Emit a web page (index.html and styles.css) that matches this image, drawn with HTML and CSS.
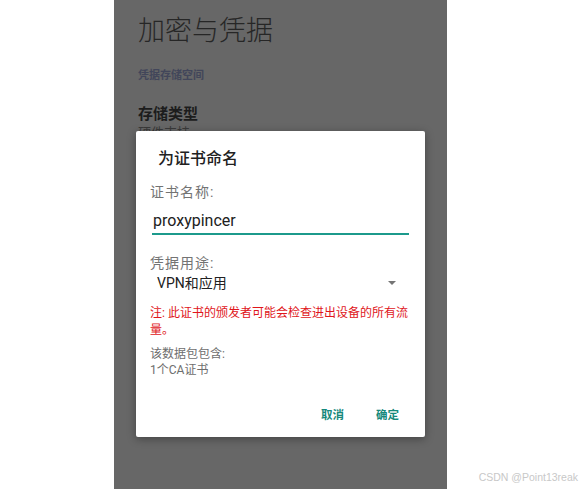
FILE: index.html
```html
<!DOCTYPE html>
<html lang="zh-CN">
<head>
    <meta charset="UTF-8">
    <meta name="viewport" content="width=device-width, initial-scale=1.0">
    <title>加密与凭据</title>
    <link rel="stylesheet" href="styles.css">
</head>
<body>

<div class="phone">
    <div class="settings">
        <h1 class="page-title">加密与凭据</h1>
        <div class="section-head">凭据存储空间</div>
        <div class="pref">
            <div class="pref-title">存储类型</div>
            <div class="pref-summary">硬件支持</div>
        </div>
    </div>

    <div class="dialog">
        <h2 class="dialog-title">为证书命名</h2>
        <div class="dialog-body">
            <div class="field-label">证书名称:</div>
            <div class="text-input">proxypincer</div>

            <div class="field-label usage-label">凭据用途:</div>
            <div class="spinner">
                <span>VPN和应用</span>
                <svg class="spinner-arrow" width="8" height="4" viewBox="0 0 8 4"><path d="M0 0 L8 0 L4 4 Z" fill="#757575"/></svg>
            </div>

            <p class="warning">注: 此证书的颁发者可能会检查进出设备的所有流量。</p>

            <div class="contents">
                <div>该数据包包含:</div>
                <div>1个CA证书</div>
            </div>
        </div>
        <div class="dialog-buttons">
            <button>取消</button>
            <button>确定</button>
        </div>
    </div>
</div>

<div class="watermark">CSDN @Point13reak</div>

</body>
</html>
```

FILE: styles.css
```css
body {
    margin: 0;
    padding: 0 0 0 114px;
    background: #ffffff;
    font-family: Roboto, "Noto Sans CJK SC", sans-serif;
    height: 489px;
    overflow: hidden;
    position: relative;
}

/* dimmed settings screen behind the dialog */
.phone {
    width: 333px;
    height: 489px;
    background: #676767;
    position: relative;
}
.settings {
    padding: 13px 24px 0;
}
.page-title {
    margin: 0;
    font-size: 27px;
    line-height: 36px;
    font-weight: 300;
    color: #262626;
}
.section-head {
    margin-top: 18px;
    font-family: "Noto Sans CJK SC", sans-serif;
    font-size: 11px;
    line-height: 14px;
    font-weight: bold;
    color: #42465a;
}
.pref {
    margin-top: 24px;
}
.pref-title {
    font-size: 15px;
    line-height: 19px;
    font-weight: bold;
    color: #1c1c1c;
}
.pref-summary {
    margin-top: 1px;
    font-size: 13px;
    line-height: 16px;
    color: #3a3a3a;
}

/* modal dialog */
.dialog {
    position: absolute;
    left: 22px;
    top: 131px;
    width: 289px;
    height: 306px;
    background: #ffffff;
    border-radius: 2px;
    box-shadow: 0 2px 8px rgba(0, 0, 0, 0.35);
    display: flex;
    flex-direction: column;
}
.dialog-title {
    margin: 0;
    padding: 17px 22px 0;
    font-size: 16px;
    line-height: 22px;
    font-weight: 500;
    color: #212121;
}
.dialog-body {
    padding: 0 16px 0 14px;
    flex: 1;
}
.field-label {
    margin-top: 12px;
    font-size: 14px;
    line-height: 20px;
    letter-spacing: 1px;
    color: #737373;
}
.text-input {
    margin: 9px 0 0 2px;
    padding: 0 0 2px 1px;
    font-size: 16px;
    line-height: 20px;
    color: #212121;
    border-bottom: 2px solid #1c9a8c;
}
.usage-label {
    margin-top: 18px;
}
.spinner {
    display: flex;
    align-items: center;
    justify-content: space-between;
    padding: 0 13px 0 7px;
    font-size: 14px;
    line-height: 20px;
    color: #212121;
}
.warning {
    margin: 12px 0 0;
    font-size: 12px;
    line-height: 17px;
    color: #e0161b;
}
.contents {
    margin-top: 7px;
    font-size: 12px;
    line-height: 16px;
    color: #6e6e6e;
}
.dialog-buttons {
    display: flex;
    justify-content: flex-end;
    gap: 32px;
    padding: 0 26px 14px;
}
.dialog-buttons button {
    background: none;
    border: none;
    padding: 0;
    font-family: Roboto, "Noto Sans CJK SC", sans-serif;
    font-size: 11.5px;
    line-height: 16px;
    font-weight: bold;
    color: #16897b;
    cursor: pointer;
}

.watermark {
    position: absolute;
    right: 4px;
    bottom: 6px;
    font-family: "Liberation Sans", "Noto Sans CJK SC", sans-serif;
    font-size: 10.5px;
    color: #c8c8c8;
}
```
